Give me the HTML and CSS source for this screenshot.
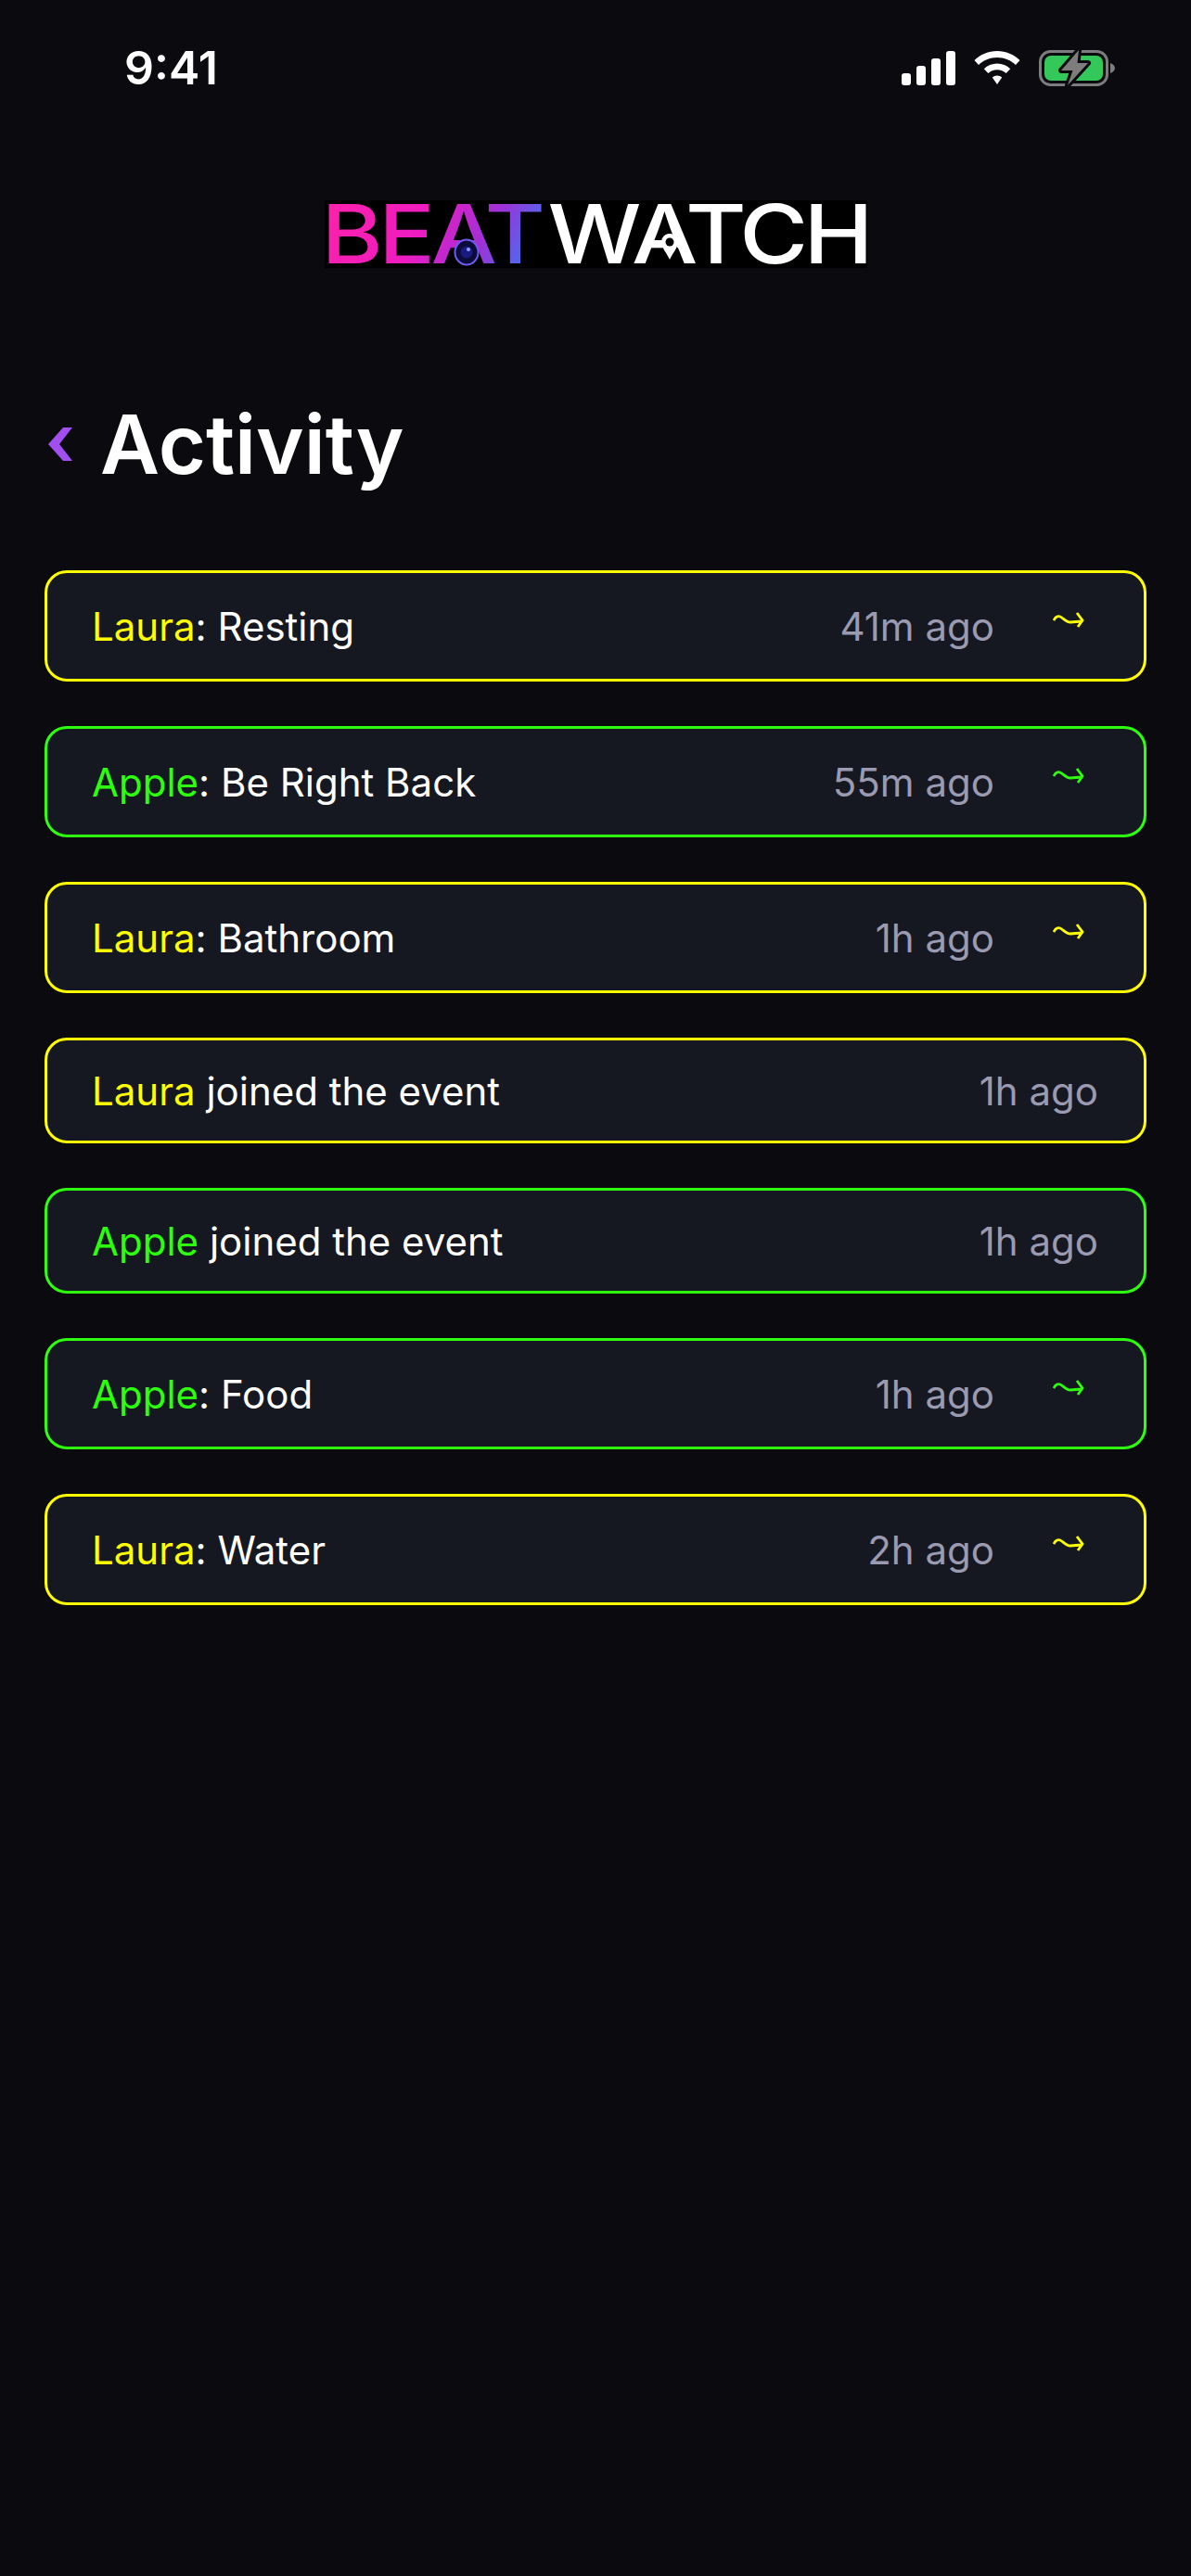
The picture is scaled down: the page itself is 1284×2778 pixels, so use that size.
FILE: index.html
```html
<!DOCTYPE html>
<html lang="en">
<head>
    <meta charset="UTF-8">
    <meta name="viewport" content="width=device-width, initial-scale=1.0">
    <title>BeatWatch Activity</title>
    <link rel="stylesheet" href="styles.css">
</head>
<body>
    <div class="status-bar">
        <span class="status-time">9:41</span>
        <div class="status-icons">
            <svg class="icon-signal" width="58" height="37" viewBox="0 0 58 37">
                <rect x="0" y="24" width="10" height="13" rx="3" fill="#fff"/>
                <rect x="16" y="16" width="10" height="21" rx="3" fill="#fff"/>
                <rect x="32" y="8" width="10" height="29" rx="3" fill="#fff"/>
                <rect x="48" y="0" width="10" height="37" rx="3" fill="#fff"/>
            </svg>
            <svg class="icon-wifi" width="50" height="36" viewBox="0 0 50 36">
                <path d="M25 0C15.500 0 7 3.800 0.500 10L5 15C10 10 17.200 7 25 7S40 10 45 15L49.500 10C43 3.800 34.500 0 25 0Z" fill="#fff"/>
                <path d="M25 13.500C19.500 13.500 14.500 15.700 10.800 19.300L15.300 24C17.800 21.600 21.200 20.200 25 20.200S32.200 21.600 34.700 24L39.200 19.300C35.500 15.700 30.500 13.500 25 13.500Z" fill="#fff"/>
                <path d="M25 26.500C23 26.500 21.200 27.200 19.800 28.500L25 36L30.200 28.500C28.800 27.200 27 26.500 25 26.500Z" fill="#fff"/>
            </svg>
            <svg class="icon-battery" width="82" height="40" viewBox="0 0 82 40">
                <rect x="1.500" y="2.500" width="72" height="36" rx="11" fill="none" stroke="#7d7d7d" stroke-width="3"/>
                <rect x="6" y="7" width="63" height="27" rx="7" fill="#34c759"/>
                <path d="M77 15C80 16 82 18 82 20.500S80 25 77 26Z" fill="#7d7d7d"/>
                <path d="M43 1L24 23H36.500L31 39L53 15H41.500Z" fill="#7d7d7d" stroke="#0a0a0f" stroke-width="6" stroke-linejoin="round" paint-order="stroke"/>
            </svg>
        </div>
    </div>

    <div class="logo-row">
        <div class="logo">
            <div class="logo-text"><span class="logo-beat">BEAT</span><span class="logo-watch">WATCH</span></div>
            <svg class="logo-lens" width="28" height="30" viewBox="0 0 28 30">
                <polygon points="13.500,-6 2.500,15 24.500,15" fill="#000"/>
                <ellipse cx="14" cy="15" rx="12.500" ry="13.500" fill="#0c0c3a" stroke="#6d5cf0" stroke-width="2"/>
                <circle cx="14" cy="15" r="6.500" fill="#1a1a80"/>
                <circle cx="16" cy="12" r="2" fill="#8fa0ff"/>
            </svg>
            <svg class="logo-pin" width="18" height="28" viewBox="0 0 18 28">
                <polygon points="9.500,-1 -1.500,22 20.500,22" fill="#000"/>
                <path d="M9 0C4 0 0 4 0 9C0 15 6 21 9 28C12 21 18 15 18 9C18 4 14 0 9 0Z" fill="#fff"/>
                <circle cx="9" cy="9" r="4.500" fill="#000"/>
            </svg>
        </div>
    </div>

    <div class="page-title">
        <svg class="back-icon" width="26" height="36" viewBox="0 0 26 36">
            <path d="M16 0H26L12 18L26 36H16L0 18Z" fill="#a24ff0"/>
        </svg>
        <h1>Activity</h1>
    </div>

    <div class="activity-list">
        <div class="activity-row laura">
            <div class="activity-text"><span class="name">Laura</span>: Resting</div>
            <span class="activity-time">41m ago</span>
            <svg class="arrow" width="34" height="18" viewBox="0 0 34 18"><path d="M1 10C3 6 6 5 8 6C11 7 14 12 19 12L31 11M26 2L32 10L27 17" fill="none" stroke="currentColor" stroke-width="2.800"/></svg>
        </div>
        <div class="activity-row apple">
            <div class="activity-text"><span class="name">Apple</span>: Be Right Back</div>
            <span class="activity-time">55m ago</span>
            <svg class="arrow" width="34" height="18" viewBox="0 0 34 18"><path d="M1 10C3 6 6 5 8 6C11 7 14 12 19 12L31 11M26 2L32 10L27 17" fill="none" stroke="currentColor" stroke-width="2.800"/></svg>
        </div>
        <div class="activity-row laura">
            <div class="activity-text"><span class="name">Laura</span>: Bathroom</div>
            <span class="activity-time">1h ago</span>
            <svg class="arrow" width="34" height="18" viewBox="0 0 34 18"><path d="M1 10C3 6 6 5 8 6C11 7 14 12 19 12L31 11M26 2L32 10L27 17" fill="none" stroke="currentColor" stroke-width="2.800"/></svg>
        </div>
        <div class="activity-row laura joined">
            <div class="activity-text"><span class="name">Laura</span> joined the event</div>
            <span class="activity-time">1h ago</span>
        </div>
        <div class="activity-row apple joined">
            <div class="activity-text"><span class="name">Apple</span> joined the event</div>
            <span class="activity-time">1h ago</span>
        </div>
        <div class="activity-row apple">
            <div class="activity-text"><span class="name">Apple</span>: Food</div>
            <span class="activity-time">1h ago</span>
            <svg class="arrow" width="34" height="18" viewBox="0 0 34 18"><path d="M1 10C3 6 6 5 8 6C11 7 14 12 19 12L31 11M26 2L32 10L27 17" fill="none" stroke="currentColor" stroke-width="2.800"/></svg>
        </div>
        <div class="activity-row laura">
            <div class="activity-text"><span class="name">Laura</span>: Water</div>
            <span class="activity-time">2h ago</span>
            <svg class="arrow" width="34" height="18" viewBox="0 0 34 18"><path d="M1 10C3 6 6 5 8 6C11 7 14 12 19 12L31 11M26 2L32 10L27 17" fill="none" stroke="currentColor" stroke-width="2.800"/></svg>
        </div>
    </div>
</body>
</html>
```

FILE: styles.css
```css
html, body {
    margin: 0;
    padding: 0;
}
body {
    width: 1284px;
    height: 2778px;
    overflow: hidden;
    background-color: #0a0a0f;
    color: #fff;
    font-family: Inter, "Noto Sans", sans-serif;
}
.status-bar {
    display: flex;
    align-items: center;
    justify-content: space-between;
    height: 54px;
    padding: 46px 82px 0 134px;
}
.status-time {
    font-size: 50px;
    font-weight: 600;
    line-height: 54px;
}
.status-icons {
    display: flex;
    align-items: center;
    gap: 20px;
}
.logo-row {
    display: flex;
    justify-content: center;
    margin-top: 116px;
}
.logo {
    position: relative;
    display: flex;
    align-items: center;
    justify-content: center;
    width: 585px;
    height: 73px;
    background-color: #000;
}
.logo-text {
    font-size: 88px;
    font-weight: 500;
    line-height: 73px;
    letter-spacing: -4px;
    white-space: nowrap;
    transform: scaleX(1.145);
}
.logo-beat {
    background-image: linear-gradient(115deg, #ff22a8 0%, #ee1cc0 45%, #a030d8 70%, #1f8cf5 100%);
    -webkit-background-clip: text;
    background-clip: text;
    color: transparent;
}
.logo-watch {
    margin-left: 6px;
    color: #fff;
}
.logo-lens {
    position: absolute;
    left: 139px;
    top: 41px;
    overflow: visible;
}
.logo-pin {
    position: absolute;
    left: 363px;
    top: 36px;
    overflow: visible;
}
.page-title {
    display: flex;
    align-items: center;
    gap: 30px;
    margin-top: 132px;
    padding-left: 52px;
}
.page-title h1 {
    margin: 0;
    font-size: 88px;
    font-weight: 600;
    line-height: 116px;
}
.activity-list {
    display: flex;
    flex-direction: column;
    gap: 48px;
    margin: 78px 48px 0;
}
.activity-row {
    display: flex;
    align-items: center;
    height: 120px;
    box-sizing: border-box;
    padding: 0 48px;
    border: 3px solid;
    border-radius: 24px;
    background-color: #161821;
    font-size: 42px;
}
.activity-row.joined {
    height: 114px;
    padding-right: 49px;
}
.laura {
    border-color: #ffff00;
    color: #ffff00;
}
.apple {
    border-color: #2dff0f;
    color: #2dff0f;
}
.activity-text {
    flex: 1;
    color: #fff;
}
.laura .name {
    color: #ffff00;
}
.apple .name {
    color: #2dff0f;
}
.activity-time {
    color: #9a9ab0;
}
.arrow {
    margin: -14px 16px 0 63px;
}
```
